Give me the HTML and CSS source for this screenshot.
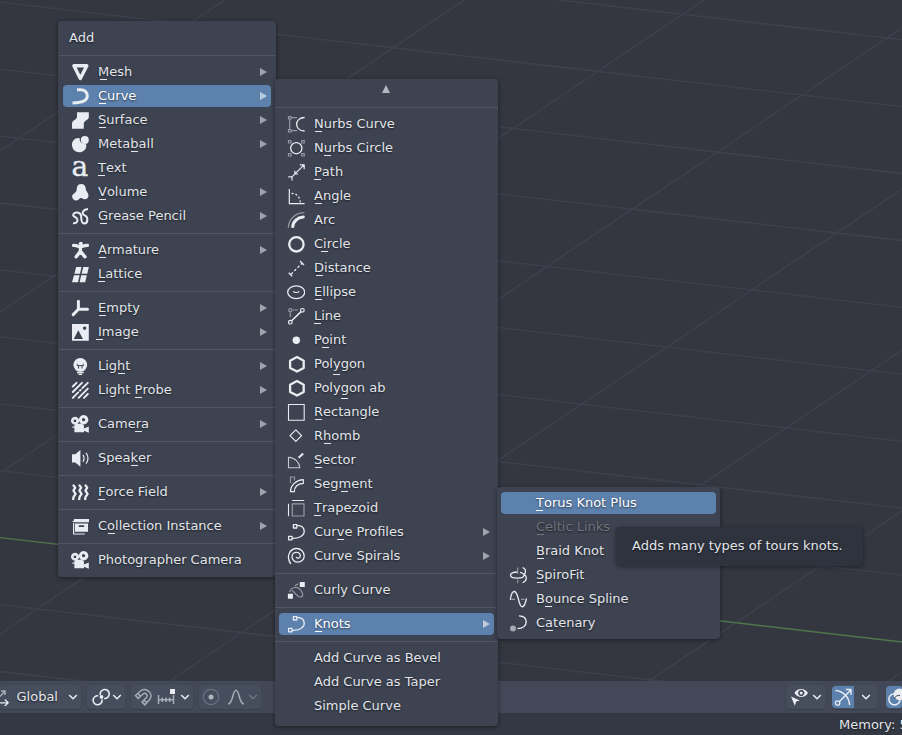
FILE: index.html
```html
<!DOCTYPE html>
<html lang="en">
<head>
    <meta charset="UTF-8">
    <meta name="viewport" content="width=device-width, initial-scale=1.0">
    <title>Add Curve Menu</title>
    <link rel="stylesheet" href="styles.css">
</head>
<body>

    <!-- Icon set, all drawn in an 18x18 box -->
    <svg class="icon-defs" width="0" height="0">
        <symbol id="mesh" viewBox="0 0 18 18"><path d="M2.9 2.7H15.8L9.3 15.6Z" class="s" stroke-width="3.4"/></symbol>
        <symbol id="curve" viewBox="0 0 18 18"><path d="M6 2.8H9.5C14 2.8 16.3 5.6 16.3 9C16.3 13.5 11.5 15.8 1.5 16" class="s" stroke-width="3"/></symbol>
        <symbol id="surface" viewBox="0 0 18 18"><path d="M6 1.3H17.8V6.5C17 9.5 12.8 9.5 12.8 13V17.7H1V12.5C1.4 8.6 6 9.5 6 5Z" class="f"/></symbol>
        <symbol id="metaball" viewBox="0 0 18 18"><path d="M8.6 3.2C4.5 2.4 1 5.4 1 9.8C1 14.2 4.2 17.3 8.2 17.3C12.4 17.3 15.6 14.2 15.3 10L14.2 8.8L10.5 8Q8.2 5.5 8.6 3.2Z" class="f"/><circle cx="13.8" cy="5" r="4" class="f"/></symbol>
        <symbol id="volume" viewBox="0 0 18 18"><path d="M10.2 1C13.4 1 15 3.4 14.8 6.2C14.8 8 17.7 10 17.5 13C17.2 16 13.5 17.3 11 15.3C9.8 14.6 9 15 8 16.2C5.5 18.8 1 17 1.1 13.4C1.2 10.5 5 10.4 5.6 7C5.9 4 6.4 1 10.2 1Z" class="f"/></symbol>
        <symbol id="grease" viewBox="0 0 18 18"><path d="M2 16.3C5.8 16.8 7.6 13.8 6 11.6C4.6 9.4 1 9.6 2.5 7C4 4.6 9.2 5 10 8.5C10.6 12 9.8 16.5 13 16.5C17.4 16.5 17.4 9.6 13.6 8.4C10.2 7 11.4 2.6 17 2" class="s" stroke-width="2"/></symbol>
        <symbol id="armature" viewBox="0 0 18 18"><circle cx="9.8" cy="2.8" r="2.1" class="f"/><path d="M2.6 4.4C6 4.2 7.5 5.8 9.4 5.8S13 4.2 16.4 4.4M9.4 6.3V10.3L5.2 15.8M9.4 10.3L14 15.8" class="s" stroke-width="3.4" stroke-linecap="round"/></symbol>
        <symbol id="lattice" viewBox="0 0 18 18"><path d="M5.2 2H10.5L9 8.8H3.4ZM12.3 2H17.8L16.3 8.8H10.6ZM3 10.2H8.6L7 17.2H1ZM10.2 10.2H15.8L14.2 17.2H8.6Z" class="f"/></symbol>
        <symbol id="empty" viewBox="0 0 18 18"><path d="M7.4 2.2V10.3H16.5M7.4 10.3L2.2 15.6" class="s" stroke-width="3" stroke-linecap="round"/></symbol>
        <symbol id="image" viewBox="0 0 18 18"><path fill-rule="evenodd" d="M1 1H17.8V17.8H1ZM2.8 16H12L7.3 7.2ZM13.6 3.4A1.7 1.7 0 1 0 13.7 3.4Z" class="f"/></symbol>
        <symbol id="light" viewBox="0 0 18 18"><circle cx="9.3" cy="7.8" r="6.9" class="f"/><path d="M5.6 12H13V14.2H5.6Z" class="f"/><path d="M6.3 6.8V8.6H12.3V6.8M7.6 8.6V11.6M11 8.6V11.6" class="d" stroke-width="1"/><path d="M6 15.6H12.6M7.5 17.4H11.1" class="s" stroke-width="1.1"/></symbol>
        <symbol id="probe" viewBox="0 0 18 18"><path d="M1.8 5.5L5.5 1.8M1.8 11L11 1.8M1.8 16.8L7.2 11.4M11.4 7.2L16.8 1.8M7.6 16.8L16.8 7.6M13 16.8L16.8 13M8.9 9.7L9.7 8.9" class="s" stroke-width="1.9" stroke-linecap="round"/></symbol>
        <symbol id="camera" viewBox="0 0 18 18"><path fill-rule="evenodd" d="M4 1.8A4 4 0 1 0 4.1 1.8ZM4 4.4A1.4 1.4 0 1 1 3.9 4.4ZM12.6 0A4.7 4.7 0 1 0 12.7 0ZM12.6 3.1A1.6 1.6 0 1 1 12.5 3.1Z" class="f"/><path d="M5 9L11 8.4L13 10.8V17.3H3.4V12.8H1.4V11.4H3.4V10.2ZM13 13.6L17.8 11.4V17.7L13 15.8Z" class="f"/></symbol>
        <symbol id="speaker" viewBox="0 0 18 18"><path d="M1 5.2H4.3L9.4 1V17.8L4.3 13.6H1Z" class="f"/><path d="M12 5.8Q14 9.3 12 12.8M15 3.9Q19 9.3 15 14.7" class="s" stroke-width="1.2"/></symbol>
        <symbol id="force" viewBox="0 0 18 18"><path d="M2 1.8L4.2 4.6L2.4 7.6L4.6 10.8L2.6 13.8L2 17M8 1.8L10.2 4.6L8.4 7.6L10.6 10.8L8.6 13.8L8 17M14 1.8L16.2 4.6L14.4 7.6L16.6 10.8L14.6 13.8L14 17" class="s" stroke-width="2.3"/></symbol>
        <symbol id="collection" viewBox="0 0 18 18"><path fill-rule="evenodd" d="M3 2H18V5.2H3ZM4 6.4H17V14.8H4ZM7.8 8.2V9.9H13.2V8.2Z" class="f"/><path d="M3 4.3H1.6M2.6 6V17H13.8" class="s" stroke-width="1.2"/></symbol>

        <symbol id="nurbs-curve" viewBox="0 0 18 18"><path d="M1.5 1.5h2.5v2.5h-2.5zM1.5 14.5h2.5v2.5h-2.5zM2.7 4V14.5M4 2.7H10M4 15.7H10" class="g"/><path d="M17.6 2.5C7 2.5 7 16 17.6 16" class="s" stroke-width="1.3"/></symbol>
        <symbol id="nurbs-circle" viewBox="0 0 18 18"><path d="M1.5 1.5h2.5v2.5h-2.5zM1.5 14.5h2.5v2.5h-2.5zM14.7 1.5h2.5v2.5h-2.5zM14.7 14.5h2.5v2.5h-2.5z" class="g"/><circle cx="9.3" cy="9.2" r="5.6" class="s" stroke-width="1.3"/></symbol>
        <symbol id="path" viewBox="0 0 18 18"><path d="M5 13.8L17 1.8M12.8 1.8H17.2V6.2M1.3 13.8H5V17.4M7.8 7.8V11H11" class="s" stroke-width="1.2"/></symbol>
        <symbol id="angle" viewBox="0 0 18 18"><path d="M2.3 2V16.7H17.6" class="s" stroke-width="1.2"/><path d="M4.5 6.4C10 6.4 13 10 13.3 15.5" class="s" stroke-width="1.2" stroke-dasharray="2 2"/></symbol>
        <symbol id="arc" viewBox="0 0 18 18"><path d="M1.3 17C1.6 8 8.5 1.7 17.5 1.7" class="g"/><path d="M5.8 15.5C6 10.5 10.5 6.5 16.2 6" class="s" stroke-width="3.2" stroke-linecap="round"/></symbol>
        <symbol id="circle" viewBox="0 0 18 18"><circle cx="9.4" cy="9.3" r="7.2" class="s" stroke-width="2.3"/></symbol>
        <symbol id="distance" viewBox="0 0 18 18"><path d="M1.7 13.7L5.2 17.2M13 2L17 6" class="s" stroke-width="1.3"/><path d="M4 15.2L15 4.2" class="s" stroke-width="1.3" stroke-dasharray="2.6 2"/></symbol>
        <symbol id="ellipse" viewBox="0 0 18 18"><ellipse cx="9.2" cy="9.2" rx="8.5" ry="6.4" class="s" stroke-width="1.3"/><path d="M6.3 8.2C7 10 11.5 10 12.2 8.2" class="s" stroke-width="1.1"/></symbol>
        <symbol id="line" viewBox="0 0 18 18"><circle cx="3.3" cy="3.3" r="1.6" class="g"/><path d="M5.5 3H11M3.3 5.5V10" class="g"/><path d="M4.6 13.8L14.1 4.6" class="s" stroke-width="1.5"/><circle cx="3.3" cy="15.2" r="1.8" class="s" stroke-width="1.2"/><circle cx="15.4" cy="3.3" r="1.8" class="s" stroke-width="1.2"/></symbol>
        <symbol id="point" viewBox="0 0 18 18"><circle cx="9.3" cy="9.2" r="3.7" class="f"/></symbol>
        <symbol id="polygon" viewBox="0 0 18 18"><path d="M10 2.1L16.7 5.7V13L10 16.6L3.1 13V5.7Z" class="s" stroke-width="2.3"/></symbol>
        <symbol id="rectangle" viewBox="0 0 18 18"><path d="M1.5 1.5H17.2V17.2H1.5Z" class="s" stroke-width="1.1"/></symbol>
        <symbol id="rhomb" viewBox="0 0 18 18"><path d="M8.8 2.8L14.6 8.6L8.8 14.4L3 8.6Z" class="s" stroke-width="1.2"/></symbol>
        <symbol id="sector" viewBox="0 0 18 18"><path d="M1.5 6.2V16.8H12.8C12.5 11.3 8 6.5 1.5 6.2Z" class="s" stroke-width="1.1" opacity=".8"/><path d="M11.6 6.8L16.2 2.5" class="s" stroke-width="2"/></symbol>
        <symbol id="segment" viewBox="0 0 18 18"><path d="M3.5 8V2H7.5V5.5" class="g"/><path d="M3.5 16.7H7.3C7.5 12.3 10.5 8.8 16.3 8.4V4.6C9.5 5 3.5 10 3.5 16.7Z" class="s" stroke-width="1.2"/></symbol>
        <symbol id="trapezoid" viewBox="0 0 18 18"><path d="M5.3 4.8H17V17H5.3Z" class="g"/><path d="M5.2 1.5H17.2M1.5 4.7V17.2" class="s" stroke-width="1.1"/></symbol>
        <symbol id="curve-path" viewBox="0 0 18 18"><path d="M6.4 1.6h3.4v3.4h-3.4zM1.6 13.4h3.4v3.4h-3.4zM9.8 2.4C15 2.2 17.2 5 17.2 8.6C17.2 13 11.5 15.6 5 15.4" class="s" stroke-width="1.3"/></symbol>
        <symbol id="spiral" viewBox="0 0 18 18"><path d="M3.8 17C-1.2 10 2.5 1.5 9.5 1.5C14 1.5 17.2 4.8 17.2 9C17.2 13 14 15.2 10.8 15.2C7.5 15.2 5 12.5 5 9.7C5 7 7 5.3 9.4 5.3C12 5.3 13.5 7 13.3 9C13 11.2 10.5 12 9 10.2" class="s" stroke-width="1.3"/></symbol>
        <symbol id="curly" viewBox="0 0 18 18"><path d="M12.8 .9h5v5h-5zM.9 12.8h5v5h-5z" class="f"/><path d="M2.5 11C4 6.5 9 5.4 12 7.5C15.5 10 17.5 15.6 13.5 16C9.5 16.2 8.5 11 5 9.6M8 4.6L11.5 2.8" class="g"/></symbol>

        <symbol id="spirofit" viewBox="0 0 18 18"><path d="M8.5 6C4 6.2 1.5 7.5 1.5 9.2C1.5 13 15 13 15 9.2C15 7.8 13 6.8 11 6.3M13.6 1.5C18 3 16.5 7.5 15 8.5C18.5 10 18 15.5 13.6 16.6" class="s" stroke-width="1.3"/><path d="M8.7 1.5V8M8.7 13.5V17.2" class="g"/></symbol>
        <symbol id="bounce" viewBox="0 0 18 18"><path d="M1.4 10C2.4 0 6.4-1 8.5 6L10.5 13C12.3 19 15.6 18 17.5 8.5" class="s" stroke-width="1.3"/><path d="M2.5 9.3H6M12 9.3H15.5" class="g"/></symbol>
        <symbol id="catenary" viewBox="0 0 18 18"><circle cx="4" cy="14.6" r="3" fill="#a5a8b0"/><path d="M10 1.9C14.5 2 17.2 4.5 17.2 8C17.2 12 13.5 14.4 8.5 14.6" class="s" stroke-width="1.4"/></symbol>

        <symbol id="axes" viewBox="0 0 18 18"><path d="M9 8.5L13.8 3.2M10 3H14V7" class="g light"/><path d="M6 14.8H17M13.8 11.5L17.2 14.8L13.8 18" class="s" stroke-width="1.3"/></symbol>
        <symbol id="pivot" viewBox="0 0 18 18"><path d="M8.3 6.8A4.5 4.5 0 1 1 12.2 10.4M10 11.4A4.5 4.5 0 1 1 6.3 7.8" class="s" stroke-width="1.6"/><circle cx="9.5" cy="8.9" r="1.9" class="f"/></symbol>
        <symbol id="magnet" viewBox="0 0 18 18"><path d="M1.5 7.5L6.5 3C12-1.6 20.5 5.8 15.4 11.8L10.8 16.8L8 14L12.4 9.5C14.4 7 11.4 4 9 6L4.2 10.4ZM3.8 5.4L6.5 8.2M10 12L12.7 14.7" class="g light"/></symbol>
        <symbol id="snap" viewBox="0 0 18 18"><path d="M13 1h5v5h-5z" class="f"/><path d="M1.5 7V16M16.5 7V16M1.5 11.7H16.5M5.3 9.5V14M9 9.5V14M12.7 9.5V14" class="g light"/></symbol>
        <symbol id="proportional" viewBox="0 0 18 18"><circle cx="9" cy="9" r="7.7" class="g dim"/><circle cx="9" cy="9" r="2.5" fill="#b0b4bd"/></symbol>
        <symbol id="falloff" viewBox="0 0 18 18"><path d="M1 16C6 16 5.5 2.2 9 2.2S12 16 17 16" class="g light"/></symbol>
        <symbol id="eye" viewBox="0 0 18 18"><path fill-rule="evenodd" d="M4.5 5C7-.2 15-.2 18 5C15 10.2 7.5 10.2 4.5 5ZM11.2 1.8A3.2 3.2 0 1 0 11.3 1.8Z" class="f"/><circle cx="11.2" cy="5" r="1.5" class="f"/><path d="M1 8.5L9.8 12.5L6.2 13.6L4.8 17.8Z" class="f"/></symbol>
        <symbol id="gizmo" viewBox="0 0 18 18"><path d="M5 14L16.5 2.2M11.8 1.5H17V6.7M1.5 2.5C9 2.8 15 9 15.6 17" class="s" stroke-width="1.4"/><circle cx="3.6" cy="15" r="2.2" class="s" stroke-width="1.3"/></symbol>
        <symbol id="overlay" viewBox="0 0 18 18"><circle cx="11.5" cy="6.4" r="5.8" class="f"/><circle cx="6.5" cy="11.3" r="5.6" class="s" stroke-width="1.5"/><path d="M6.5 11C7 8 10 7 12 7.5" class="d"/></symbol>
        <symbol id="chevron" viewBox="0 0 10 10"><path d="M1.2 3L5 6.8L8.8 3" class="s" stroke-width="1.5"/></symbol>
    </svg>

    <main class="viewport">
        <svg class="floor" width="902" height="681">
            <path class="grid" d="M0 -64.7L902 39.7M0 2.2L902 106.6M0 69.1L902 173.5M0 136.1L902 240.5M0 203L902 307.4M0 269.9L902 374.3M0 336.9L902 441.3M0 403.8L902 508.2M0 470.7L902 575.1M0 604.6L902 709M0 671.5L902 775.9"/>
            <path class="grid" d="M0 151L902 -455M0 312L902 -294M0 473L902 -133M0 634L902 28M0 795L902 189M0 956L902 350M0 1117L902 511M0 1278L902 672"/>
            <path class="axis" d="M0 537.6L902 642"/>
        </svg>
    </main>

    <header class="toolbar">
        <div class="group orientation"><svg class="icon"><use href="#axes"/></svg><span>Global</span><svg class="chevron"><use href="#chevron"/></svg></div>
        <div class="group pivot"><svg class="icon"><use href="#pivot"/></svg><svg class="chevron"><use href="#chevron"/></svg></div>
        <div class="group snapping"><svg class="icon"><use href="#magnet"/></svg><svg class="icon"><use href="#snap"/></svg><svg class="chevron"><use href="#chevron"/></svg></div>
        <div class="group editing"><svg class="icon"><use href="#proportional"/></svg><svg class="icon"><use href="#falloff"/></svg><svg class="chevron faded"><use href="#chevron"/></svg></div>
        <div class="group visibility"><svg class="icon"><use href="#eye"/></svg><svg class="chevron"><use href="#chevron"/></svg></div>
        <div class="group gizmos"><span class="toggle"><svg class="icon"><use href="#gizmo"/></svg></span><svg class="chevron"><use href="#chevron"/></svg></div>
        <div class="group overlays"><span class="toggle"><svg class="icon"><use href="#overlay"/></svg></span></div>
    </header>

    <footer class="statusbar">Memory: 5</footer>

    <nav class="menu menu-add">
        <div class="title">Add</div>
        <hr>
        <div class="item sub"><svg class="icon"><use href="#mesh"/></svg><span><u>M</u>esh</span></div>
        <div class="item sub active"><svg class="icon"><use href="#curve"/></svg><span><u>C</u>urve</span></div>
        <div class="item sub"><svg class="icon"><use href="#surface"/></svg><span><u>S</u>urface</span></div>
        <div class="item sub"><svg class="icon"><use href="#metaball"/></svg><span>Meta<u>b</u>all</span></div>
        <div class="item"><svg class="icon" viewBox="0 0 18 18"><text x="0.6" y="17.4" class="glyph">a</text></svg><span><u>T</u>ext</span></div>
        <div class="item sub"><svg class="icon"><use href="#volume"/></svg><span><u>V</u>olume</span></div>
        <div class="item sub"><svg class="icon"><use href="#grease"/></svg><span><u>G</u>rease Pencil</span></div>
        <hr>
        <div class="item sub"><svg class="icon"><use href="#armature"/></svg><span><u>A</u>rmature</span></div>
        <div class="item"><svg class="icon"><use href="#lattice"/></svg><span><u>L</u>attice</span></div>
        <hr>
        <div class="item sub"><svg class="icon"><use href="#empty"/></svg><span><u>E</u>mpty</span></div>
        <div class="item sub"><svg class="icon"><use href="#image"/></svg><span><u>I</u>mage</span></div>
        <hr>
        <div class="item sub"><svg class="icon"><use href="#light"/></svg><span>Lig<u>h</u>t</span></div>
        <div class="item sub"><svg class="icon"><use href="#probe"/></svg><span>Light <u>P</u>robe</span></div>
        <hr>
        <div class="item sub"><svg class="icon"><use href="#camera"/></svg><span>Came<u>r</u>a</span></div>
        <hr>
        <div class="item"><svg class="icon"><use href="#speaker"/></svg><span>Spea<u>k</u>er</span></div>
        <hr>
        <div class="item sub"><svg class="icon"><use href="#force"/></svg><span><u>F</u>orce Field</span></div>
        <hr>
        <div class="item sub"><svg class="icon"><use href="#collection"/></svg><span>C<u>o</u>llection Instance</span></div>
        <hr>
        <div class="item"><svg class="icon"><use href="#camera"/></svg><span>Photographer Camera</span></div>
    </nav>

    <nav class="menu menu-curve">
        <div class="scroll-up"></div>
        <hr>
        <div class="item"><svg class="icon"><use href="#nurbs-curve"/></svg><span><u>N</u>urbs Curve</span></div>
        <div class="item"><svg class="icon"><use href="#nurbs-circle"/></svg><span>N<u>u</u>rbs Circle</span></div>
        <div class="item"><svg class="icon"><use href="#path"/></svg><span><u>P</u>ath</span></div>
        <div class="item"><svg class="icon"><use href="#angle"/></svg><span><u>A</u>ngle</span></div>
        <div class="item"><svg class="icon"><use href="#arc"/></svg><span>Arc</span></div>
        <div class="item"><svg class="icon"><use href="#circle"/></svg><span>C<u>i</u>rcle</span></div>
        <div class="item"><svg class="icon"><use href="#distance"/></svg><span><u>D</u>istance</span></div>
        <div class="item"><svg class="icon"><use href="#ellipse"/></svg><span><u>E</u>llipse</span></div>
        <div class="item"><svg class="icon"><use href="#line"/></svg><span><u>L</u>ine</span></div>
        <div class="item"><svg class="icon"><use href="#point"/></svg><span>P<u>o</u>int</span></div>
        <div class="item"><svg class="icon"><use href="#polygon"/></svg><span>Pol<u class="low">y</u>gon</span></div>
        <div class="item"><svg class="icon"><use href="#polygon"/></svg><span>Poly<u class="low">g</u>on ab</span></div>
        <div class="item"><svg class="icon"><use href="#rectangle"/></svg><span><u>R</u>ectangle</span></div>
        <div class="item"><svg class="icon"><use href="#rhomb"/></svg><span>R<u>h</u>omb</span></div>
        <div class="item"><svg class="icon"><use href="#sector"/></svg><span><u>S</u>ector</span></div>
        <div class="item"><svg class="icon"><use href="#segment"/></svg><span>Seg<u>m</u>ent</span></div>
        <div class="item"><svg class="icon"><use href="#trapezoid"/></svg><span><u>T</u>rapezoid</span></div>
        <div class="item sub"><svg class="icon"><use href="#curve-path"/></svg><span>Cur<u>v</u>e Profiles</span></div>
        <div class="item sub"><svg class="icon"><use href="#spiral"/></svg><span>Curve Spirals</span></div>
        <hr>
        <div class="item"><svg class="icon"><use href="#curly"/></svg><span>Curly Curve</span></div>
        <hr>
        <div class="item sub active"><svg class="icon"><use href="#curve-path"/></svg><span><u>K</u>nots</span></div>
        <hr>
        <div class="item no-icon"><span>Add Curve as Bevel</span></div>
        <div class="item no-icon"><span>Add Curve as Taper</span></div>
        <div class="item no-icon"><span>Simple Curve</span></div>
    </nav>

    <nav class="menu menu-knots">
        <div class="item no-icon active"><span><u>T</u>orus Knot Plus</span></div>
        <div class="item no-icon disabled"><span><u>C</u>eltic Links</span></div>
        <div class="item no-icon"><span><u>B</u>raid Knot</span></div>
        <div class="item"><svg class="icon"><use href="#spirofit"/></svg><span><u>S</u>piroFit</span></div>
        <div class="item"><svg class="icon"><use href="#bounce"/></svg><span>B<u>o</u>unce Spline</span></div>
        <div class="item"><svg class="icon"><use href="#catenary"/></svg><span>C<u>a</u>tenary</span></div>
    </nav>

    <div class="tooltip">Adds many types of tours knots.</div>

</body>
</html>
```
FILE: styles.css
```css
* {
    box-sizing: border-box;
}

body {
    font-family: "DejaVu Sans", sans-serif;
    font-size: 13px;
    background: #343740;
    color: #e2e5ea;
    margin: 0;
    height: 100vh;
    display: flex;
    flex-direction: column;
    overflow: hidden;
    white-space: nowrap;
    text-shadow: 0 1px 2px rgba(0, 0, 0, 0.6);
}

/* Icons */
.icon-defs {
    position: absolute;
}

.icon {
    width: 18px;
    height: 18px;
    flex: none;
}

.chevron {
    width: 10px;
    height: 10px;
    flex: none;
}

.faded {
    opacity: 0.25;
}

.f {
    fill: #e9ecf2;
}

.s {
    fill: none;
    stroke: #e9ecf2;
    stroke-linejoin: round;
}

.g {
    fill: none;
    stroke: #9599a3;
    stroke-width: 1.2;
}

.light {
    stroke: #a9adb7;
    stroke-width: 1.5;
}

.dim {
    stroke: #6d7483;
}

.d {
    fill: none;
    stroke: #3d4351;
}

.glyph {
    font-family: "DejaVu Serif", serif;
    font-size: 28px;
    fill: #e9ecf2;
    stroke: #e9ecf2;
    stroke-width: 0.4px;
    text-shadow: none;
}

/* 3D viewport */
.viewport {
    flex: 1;
    min-height: 0;
    overflow: hidden;
}

.floor {
    display: block;
}

.grid {
    stroke: #3e424f;
    stroke-width: 1.3;
}

.axis {
    stroke: #50764a;
    stroke-width: 1.4;
}

/* Bars */
.toolbar {
    flex: none;
    height: 32px;
    background: #424857;
    display: flex;
    align-items: center;
    gap: 6px;
}

.group {
    height: 24px;
    flex: none;
    display: flex;
    align-items: center;
    background: #464d5d;
    border-radius: 4px;
    box-shadow: 0 1px 1px rgba(0, 0, 0, 0.15);
}

.orientation {
    width: 81px;
    justify-content: flex-end;
    padding-right: 3px;
}

.orientation span {
    margin: 0 10px 2px 8px;
}

.pivot {
    width: 38px;
    padding-left: 5px;
    gap: 2px;
}

.snapping {
    width: 62px;
    padding-left: 3px;
    gap: 5px;
}

.editing {
    width: 62px;
    padding-left: 3px;
    gap: 7px;
}

.editing .chevron {
    margin-left: -4px;
}

.visibility {
    width: 38px;
    margin-left: auto;
    padding-left: 3px;
    gap: 4px;
}

.gizmos {
    width: 46px;
    gap: 7px;
    margin-left: 1px;
}

.overlays {
    width: 16px;
    margin-left: 2px;
    overflow: hidden;
}

.toggle {
    width: 22px;
    height: 22px;
    flex: none;
    display: flex;
    align-items: center;
    justify-content: center;
    background: #5d81ad;
    border-radius: 4px 0 0 4px;
}

.statusbar {
    flex: none;
    height: 22px;
    line-height: 23px;
    padding-left: 839px;
    background: #333843;
}

/* Popup menus */
.menu {
    position: absolute;
    display: flex;
    flex-direction: column;
    background: #3d4351;
    border-radius: 4px;
    box-shadow: 0 1px 4px rgba(0, 0, 0, 0.45);
}

.menu-add {
    left: 58px;
    top: 21px;
    width: 218px;
    height: 556px;
    padding: 0 5px;
}

.menu-curve {
    left: 275px;
    top: 79px;
    width: 223px;
    height: 647px;
    padding: 0 4px;
}

.menu-knots {
    left: 497px;
    top: 487px;
    width: 223px;
    height: 152px;
    padding: 4px;
}

.title {
    height: 29px;
    line-height: 34px;
    padding-left: 6px;
}

.scroll-up {
    height: 23px;
    padding: 6px 1px 0 0;
}

.scroll-up::before {
    content: "";
    display: block;
    width: 0;
    margin: 0 auto;
    border: 4px solid transparent;
    border-top: 0;
    border-bottom: 8px solid #b4b7bf;
}

hr {
    flex: none;
    height: 1px;
    border: 0;
    background: #515765;
    margin: 5px -4px 4px;
}

.item {
    flex: none;
    height: 22px;
    margin: 1px 0;
    padding: 0 4px 0 8px;
    display: flex;
    align-items: center;
    gap: 9px;
    border-radius: 4px;
}

.item span {
    height: 16px;
    line-height: 15px;
}

.no-icon {
    padding-left: 35px;
}

.sub::after {
    content: "";
    margin-left: auto;
    border: 4px solid transparent;
    border-right: 0;
    border-left: 7px solid #a0a4ae;
}

.active {
    background: #5d81ad;
    color: #fff;
}

.active::after {
    border-left-color: #bccadd;
}

.disabled {
    color: #70747d;
}

/* Keyboard accelerator mark, same width under every letter */
u {
    position: relative;
    text-decoration: none;
}

u::after {
    content: "";
    position: absolute;
    left: 50%;
    bottom: -1px;
    width: 7px;
    height: 1px;
    margin-left: -3.5px;
    background: currentColor;
}

/* clears the descender of y and g */
u.low::after {
    bottom: -4px;
}

.tooltip {
    position: absolute;
    left: 616px;
    top: 527px;
    width: 247px;
    height: 39px;
    line-height: 38px;
    padding-left: 16px;
    background: #2f333e;
    border-radius: 4px;
    box-shadow: 0 1px 4px rgba(0, 0, 0, 0.4);
}
```
